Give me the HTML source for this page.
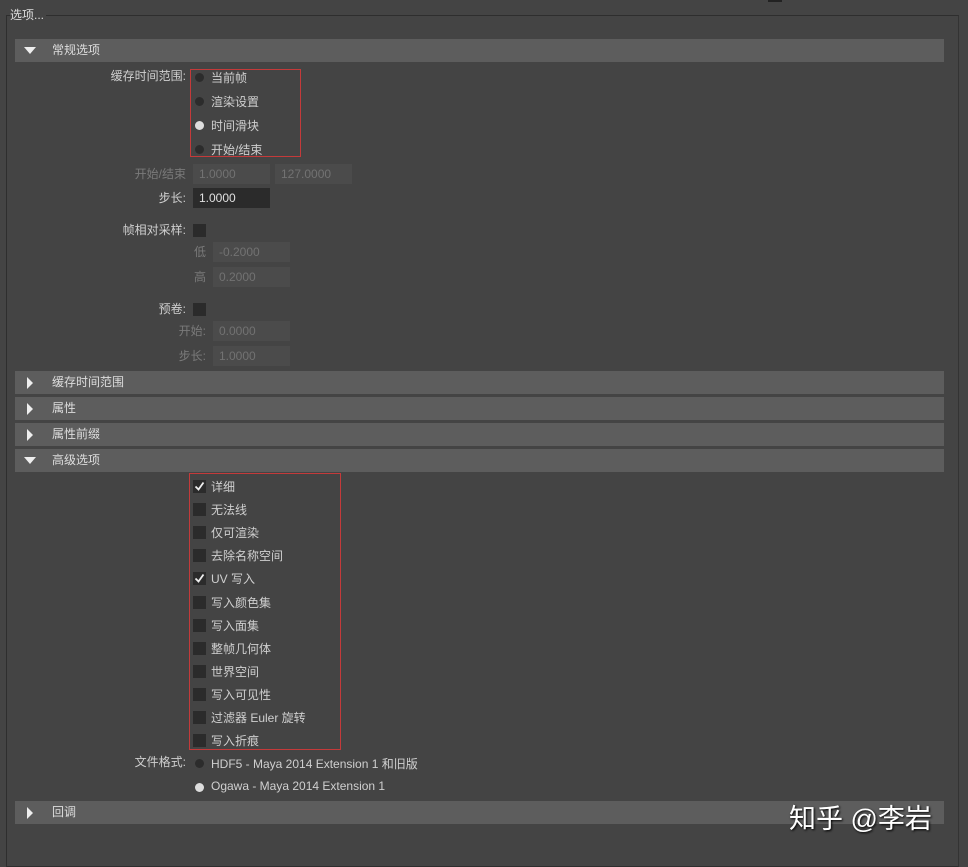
<!DOCTYPE html>
<html><head><meta charset="utf-8"><style>
body{margin:0;width:968px;height:856px;background:#444;font-family:"Liberation Sans","Noto Sans CJK SC",sans-serif;font-size:12px;color:#cfcfcf;position:relative;overflow:hidden}
.a{position:absolute;white-space:nowrap}
.frame{position:absolute;left:6px;top:15px;width:951px;height:850px;border:1px solid #2e2e2e;border-right-color:#333}
.hd{position:absolute;left:15px;width:929px;height:23px;background:#5d5d5d;color:#ddd;line-height:23px}
.hd span{position:absolute;left:37px}
.tri-d{position:absolute;left:9px;top:8px;width:0;height:0;border-left:6px solid transparent;border-right:6px solid transparent;border-top:7px solid #eee}
.tri-r{position:absolute;left:12px;top:6px;width:0;height:0;border-top:6px solid transparent;border-bottom:6px solid transparent;border-left:6px solid #eee}
.lb{position:absolute;text-align:right;line-height:20px}
.dis{color:#7a7a7a}
.rd{position:absolute;width:9px;height:9px;border-radius:50%;background:#2c2c2c}
.rd.on{background:#ddd}
.fld{position:absolute;height:20px;line-height:20px;background:#4b4b4b;color:#727272;padding-left:6px;box-sizing:border-box}
.cb{position:absolute;width:13px;height:13px;background:#2b2b2b}
.red{position:absolute;border:1px solid #c43a3a}
</style></head><body>
<div class="a" style="left:10px;top:6px;color:#ddd;background:#444;padding-right:2px;z-index:2">选项...</div>
<div class="frame"></div>
<div style="position:absolute;left:768px;top:0;width:14px;height:2px;background:#222"></div>

<div class="hd" style="top:39px"><div class="tri-d"></div><span>常规选项</span></div>

<div class="lb" style="right:782px;top:66px">缓存时间范围:</div>
<div class="rd" style="left:195px;top:73px"></div><div class="a" style="left:211px;top:69px">当前帧</div>
<div class="rd" style="left:195px;top:97px"></div><div class="a" style="left:211px;top:93px">渲染设置</div>
<div class="rd on" style="left:195px;top:121px"></div><div class="a" style="left:211px;top:117px">时间滑块</div>
<div class="rd" style="left:195px;top:145px"></div><div class="a" style="left:211px;top:141px">开始/结束</div>
<div class="red" style="left:190px;top:69px;width:109px;height:86px"></div>

<div class="lb dis" style="right:782px;top:164px">开始/结束</div>
<div class="fld" style="left:193px;top:164px;width:77px">1.0000</div>
<div class="fld" style="left:275px;top:164px;width:77px">127.0000</div>
<div class="lb" style="right:782px;top:188px">步长:</div>
<div class="fld" style="left:193px;top:188px;width:77px;background:#2b2b2b;color:#e0e0e0">1.0000</div>

<div class="lb" style="right:782px;top:220px">帧相对采样:</div>
<div class="cb" style="left:193px;top:224px"></div>
<div class="lb dis" style="right:762px;top:242px">低</div>
<div class="fld" style="left:213px;top:242px;width:77px">-0.2000</div>
<div class="lb dis" style="right:762px;top:267px">高</div>
<div class="fld" style="left:213px;top:267px;width:77px">0.2000</div>
<div class="lb" style="right:782px;top:299px">预卷:</div>
<div class="cb" style="left:193px;top:303px"></div>
<div class="lb dis" style="right:762px;top:321px">开始:</div>
<div class="fld" style="left:213px;top:321px;width:77px">0.0000</div>
<div class="lb dis" style="right:762px;top:346px">步长:</div>
<div class="fld" style="left:213px;top:346px;width:77px">1.0000</div>

<div class="hd" style="top:371px"><div class="tri-r"></div><span>缓存时间范围</span></div>
<div class="hd" style="top:397px"><div class="tri-r"></div><span>属性</span></div>
<div class="hd" style="top:423px"><div class="tri-r"></div><span>属性前缀</span></div>
<div class="hd" style="top:449px"><div class="tri-d"></div><span>高级选项</span></div>

<div id="cbs"></div>
<div class="red" style="left:189px;top:473px;width:150px;height:275px"></div>

<div class="lb" style="right:782px;top:752px">文件格式:</div>
<div class="rd" style="left:195px;top:759px"></div><div class="a" style="left:211px;top:755px">HDF5 - Maya 2014 Extension 1 和旧版</div>
<div class="rd on" style="left:195px;top:783px"></div><div class="a" style="left:211px;top:779px">Ogawa - Maya 2014 Extension 1</div>

<div class="hd" style="top:801px"><div class="tri-r"></div><span>回调</span></div>
<div class="a" style="left:789px;top:797px;font-size:27px;color:#fff;text-shadow:1px 1px 2px #000">知乎 @李岩</div>

<script>
var items=[["详细",1],["无法线",0],["仅可渲染",0],["去除名称空间",0],["UV 写入",1],["写入颜色集",0],["写入面集",0],["整帧几何体",0],["世界空间",0],["写入可见性",0],["过滤器 Euler 旋转",0],["写入折痕",0]];
var h="";
items.forEach(function(it,i){var y=480+i*23.1;
h+='<div class="cb" style="left:193px;top:'+y+'px">'+(it[1]?'<svg width="13" height="13"><path d="M2.5 6.5l3 3l5-7" stroke="#eee" stroke-width="1.8" fill="none"/></svg>':'')+'</div><div class="a" style="left:211px;top:'+(y-2)+'px">'+it[0]+'</div>';});
document.getElementById("cbs").innerHTML=h;
</script>
</body></html>
